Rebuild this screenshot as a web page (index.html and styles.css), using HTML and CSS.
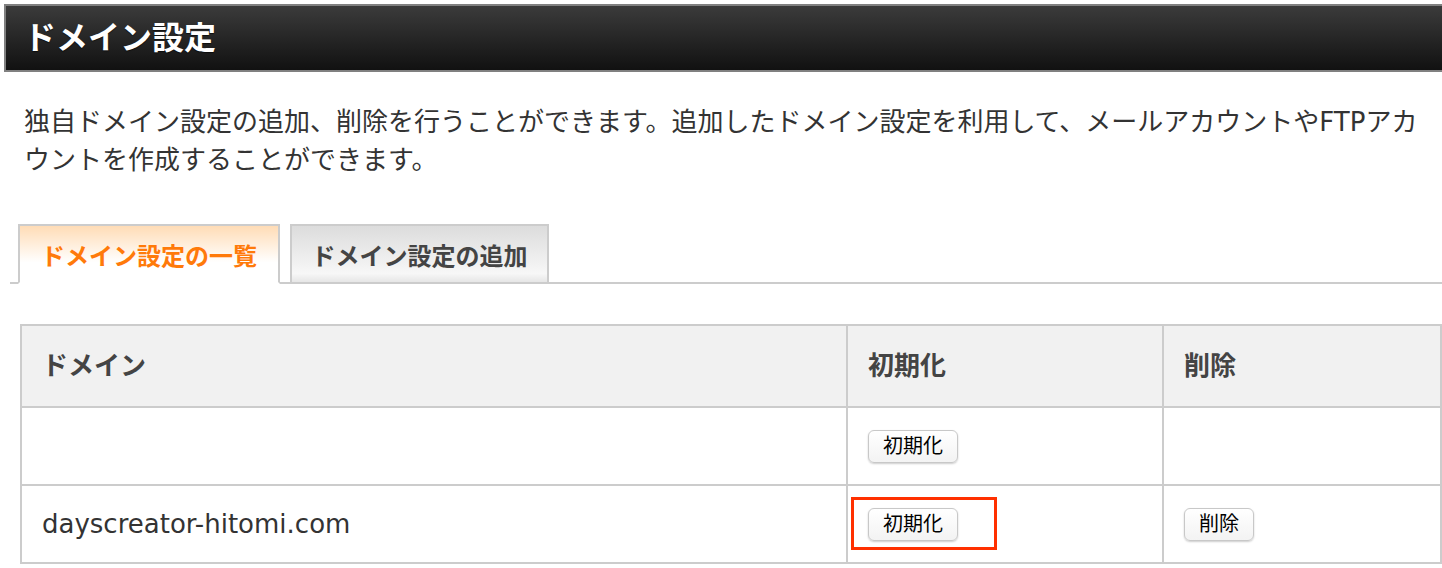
FILE: index.html
```html
<!DOCTYPE html>
<html lang="ja">
<head>
    <meta charset="UTF-8">
    <meta name="viewport" content="width=device-width, initial-scale=1.0">
    <title>ドメイン設定</title>
    <link rel="stylesheet" href="styles.css">
</head>
<body>
    <h1 class="page-title">ドメイン設定</h1>
    <p class="lead">独自ドメイン設定の追加、削除を行うことができます。追加したドメイン設定を利用して、メールアカウントやFTPアカウントを作成することができます。</p>

    <div class="tabs">
        <a class="tab tab-active" href="#">ドメイン設定の一覧</a>
        <a class="tab tab-add" href="#">ドメイン設定の追加</a>
    </div>

    <table class="domain-table">
        <colgroup>
            <col class="col-domain">
            <col class="col-init">
            <col class="col-delete">
        </colgroup>
        <thead>
            <tr>
                <th>ドメイン</th>
                <th>初期化</th>
                <th>削除</th>
            </tr>
        </thead>
        <tbody>
            <tr>
                <td></td>
                <td><button type="button" class="btn">初期化</button></td>
                <td></td>
            </tr>
            <tr>
                <td class="domain-name">dayscreator-hitomi.com</td>
                <td class="marked">
                    <button type="button" class="btn">初期化</button>
                    <span class="highlight"></span>
                </td>
                <td><button type="button" class="btn">削除</button></td>
            </tr>
        </tbody>
    </table>
</body>
</html>
```

FILE: styles.css
```css
body {
    font-family: "DejaVu Sans", "Noto Sans CJK JP", sans-serif;
    margin: 0;
    color: #333;
    background: #fff;
    overflow: hidden;
}
.page-title {
    margin: 4px -20px 0 4px;
    height: 64px;
    line-height: 64px;
    padding-left: 18px;
    border: 2px solid #808080;
    background: linear-gradient(#3b3b3b, #262626 50%, #111);
    color: #fff;
    font-size: 32px;
    font-weight: bold;
    text-shadow: 0 1px 1px rgba(0, 0, 0, 0.6);
}
.lead {
    margin: 31px 20px 0 24px;
    font-size: 26px;
    line-height: 38px;
    color: #333;
}
.tabs {
    display: flex;
    gap: 10px;
    margin: 45px 0 0 10px;
    padding-left: 8px;
    border-bottom: 2px solid #ccc;
}
.tab {
    box-sizing: border-box;
    height: 60px;
    margin-bottom: -2px;
    display: flex;
    align-items: center;
    justify-content: center;
    border: 2px solid #ccc;
    font-size: 24px;
    font-weight: bold;
    text-decoration: none;
}
.tab-active {
    width: 262px;
    border-bottom-color: #fff;
    background: linear-gradient(#ffdcb6, #fff 65%);
    color: #ff7a0a;
}
.tab-add {
    width: 259px;
    background: linear-gradient(#dcdcdc, #f7f7f7 85%, #e6e6e6);
    color: #444;
}
.domain-table {
    margin: 40px 0 0 20px;
    width: 1420px;
    border-collapse: collapse;
    table-layout: fixed;
}
.col-domain { width: 826px; }
.col-init { width: 316px; }
.col-delete { width: 278px; }
.domain-table th,
.domain-table td {
    border: 2px solid #ccc;
    padding: 0 20px;
    text-align: left;
    vertical-align: middle;
}
.domain-table th {
    height: 74px;
    padding-bottom: 6px;
    background: #f1f1f1;
    color: #444;
    font-size: 26px;
    font-weight: bold;
}
.domain-table td {
    height: 76px;
    font-size: 26px;
}
.domain-name {
    color: #333;
}
.btn {
    box-sizing: border-box;
    height: 33px;
    padding: 0 14px;
    border: 1px solid #c8c8c8;
    border-radius: 6px;
    background: linear-gradient(#fff, #f3f3f3);
    box-shadow: 0 1px 2px rgba(0, 0, 0, 0.2);
    font-family: "DejaVu Sans", "Noto Sans CJK JP", sans-serif;
    font-size: 20px;
    color: #000;
    line-height: 31px;
    margin: 0;
}
.marked {
    position: relative;
}
.highlight {
    position: absolute;
    left: 3px;
    top: 11px;
    width: 146px;
    height: 53px;
    box-sizing: border-box;
    border: 3px solid #ff3000;
}
```
